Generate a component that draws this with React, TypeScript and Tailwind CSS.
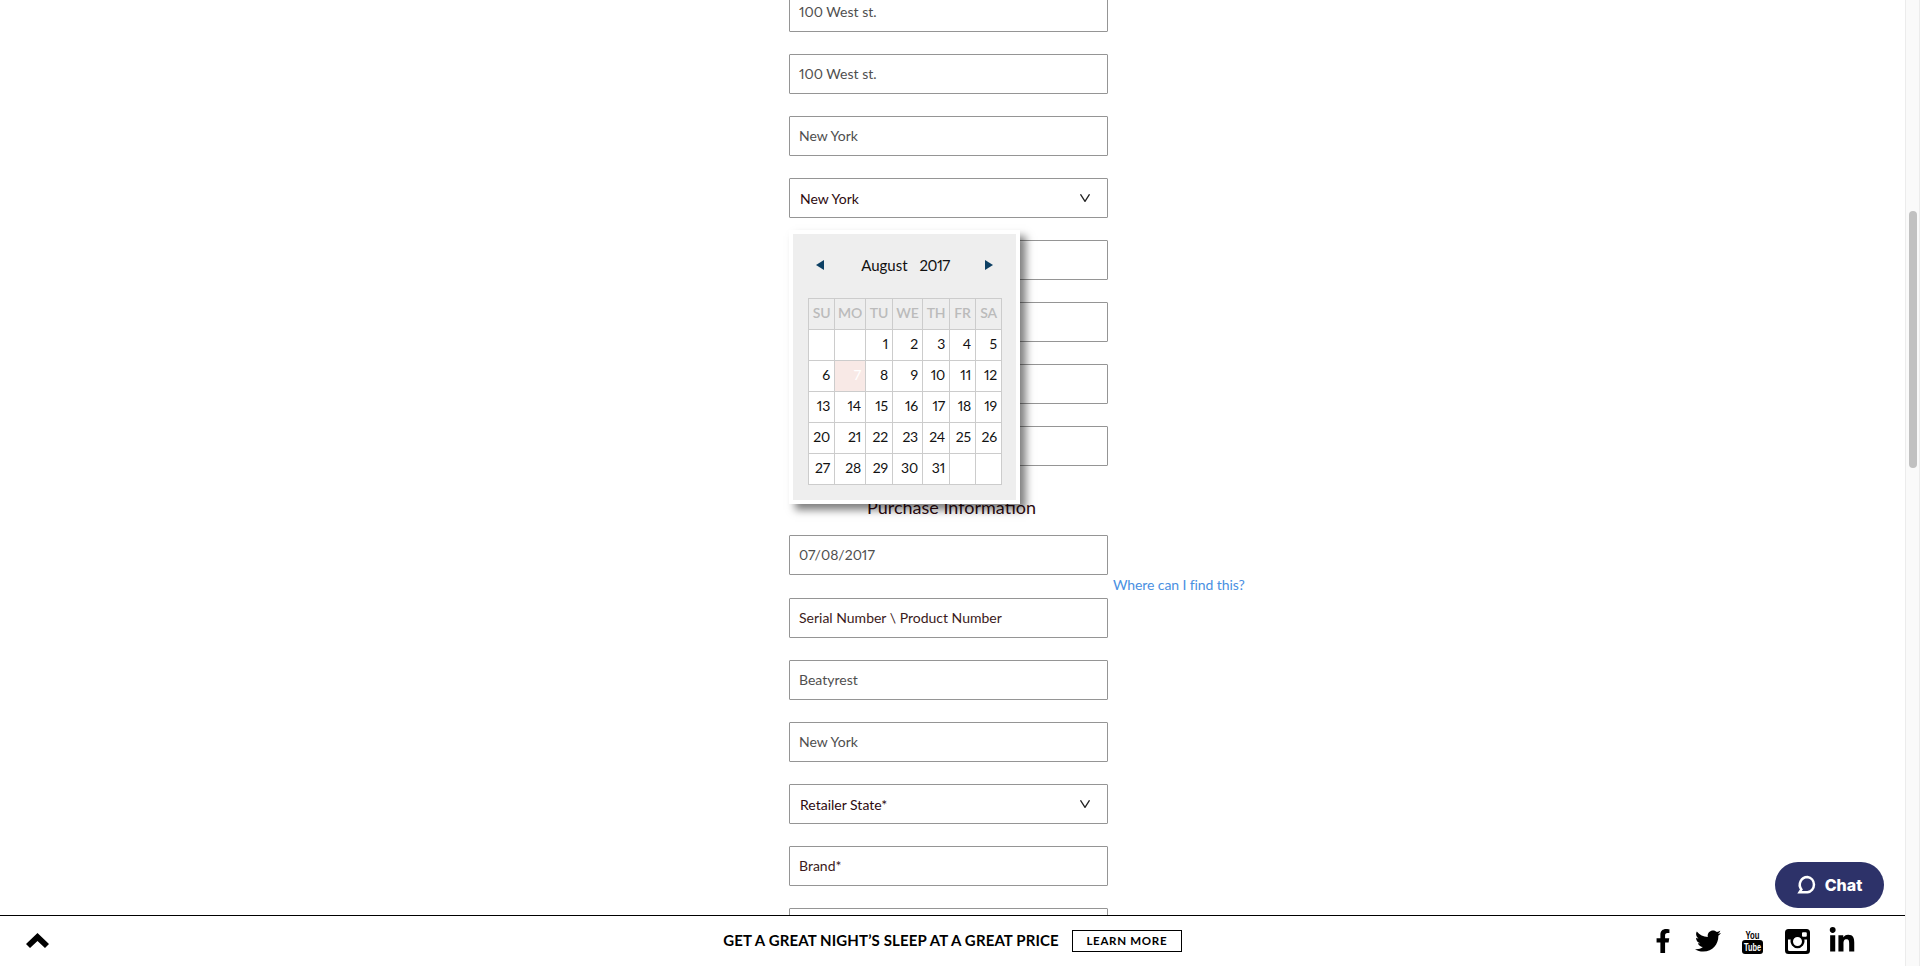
import { FaFacebookF, FaTwitter, FaLinkedinIn } from "react-icons/fa";

const font = "font-['Lato','Liberation_Sans',sans-serif]";

function Field({ text, dark }: { text: string; dark?: boolean }) {
  return (
    <div className={`h-10 w-[319px] border border-[#959595] rounded-[1px] bg-white flex items-center pl-[9px] text-[14px] ${dark ? "text-[#3b1a20]" : "text-[#4f4f4f]"}`}>
      <span className="-mt-[2px]">{text}</span>
    </div>
  );
}

function Select({ text }: { text: string }) {
  return (
    <div className="h-10 w-[319px] border border-[#959595] rounded-[1px] bg-white flex items-center justify-between pl-[10px] pr-[17px] text-[14px] text-[#2e0a10]">
      <span className="mt-[1px]">{text}</span>
      <svg width="10" height="8" viewBox="0 0 10 8" fill="none" stroke="#222" strokeWidth="1.3">
        <path d="M0.5 0.3 L5 7.4 L9.5 0.3" />
      </svg>
    </div>
  );
}

const weeks: (number | null)[][] = [
  [null, null, 1, 2, 3, 4, 5],
  [6, 7, 8, 9, 10, 11, 12],
  [13, 14, 15, 16, 17, 18, 19],
  [20, 21, 22, 23, 24, 25, 26],
  [27, 28, 29, 30, 31, null, null],
];

function Calendar() {
  return (
    <div className="absolute left-[789px] top-[230px] w-[231px] h-[274px] bg-white p-1 shadow-[6px_6px_8px_rgba(0,0,0,0.5)]">
      <div className="bg-[#eeeeee] h-full">
        <div className="h-[64px] flex items-center justify-between px-[23px] pb-[2px]">
          <svg width="8" height="10" viewBox="0 0 8 10" fill="#0c3f63"><path d="M8 0V10L0 5Z" /></svg>
          <div className="text-[15px] text-[#111] flex gap-[12px] pl-[2px]">
            <span>August</span>
            <span className="tracking-[-0.5px]">2017</span>
          </div>
          <svg width="8" height="10" viewBox="0 0 8 10" fill="#0c3f63"><path d="M0 0V10L8 5Z" /></svg>
        </div>
        <table className="ml-[15px] w-[193px] table-fixed border-collapse text-[14px] tracking-[-0.2px]">
          <colgroup>
            {[26, 31, 27, 30, 27, 26, 26].map((w, i) => (
              <col key={i} style={{ width: w }} />
            ))}
          </colgroup>
          <thead>
            <tr className="h-[31px]">
              {["SU", "MO", "TU", "WE", "TH", "FR", "SA"].map((d) => (
                <th key={d} className="border border-[#cccccc] text-center font-semibold text-[#bbbbbb] p-0 pb-[4px]">{d}</th>
              ))}
            </tr>
          </thead>
          <tbody className="bg-white">
            {weeks.map((w, i) => (
              <tr key={i} className="h-[31px]">
                {w.map((d, j) => (
                  <td key={j} className={`border border-[#cccccc] text-right pr-1 p-0 pb-[3px] ${d === 7 ? "bg-[#f8e9e6] text-white" : "text-[#111]"}`}>{d}</td>
                ))}
              </tr>
            ))}
          </tbody>
        </table>
      </div>
    </div>
  );
}

function Instagram() {
  return (
    <svg width="25" height="25" viewBox="0 0 25 25">
      <path fillRule="evenodd" fill="#000" d="M3.5 0H21.5A3.5 3.5 0 0 1 25 3.5V21.5A3.5 3.5 0 0 1 21.5 25H3.5A3.5 3.5 0 0 1 0 21.5V3.5A3.5 3.5 0 0 1 3.5 0ZM3 10.5V20.5A1.5 1.5 0 0 0 4.5 22H20.5A1.5 1.5 0 0 0 22 20.5V10.5H19.3A7 7 0 1 1 5.7 10.5ZM12.5 8A4.5 4.5 0 1 0 12.5 17A4.5 4.5 0 1 0 12.5 8ZM18 3.2A1 1 0 0 0 17 4.2V6.8A1 1 0 0 0 18 7.8H20.8A1 1 0 0 0 21.8 6.8V4.2A1 1 0 0 0 20.8 3.2Z" />
    </svg>
  );
}

function YouTube() {
  return (
    <svg width="21" height="25" viewBox="0 0 21 25" className="overflow-visible">
      <rect x="0" y="11" width="21" height="14" rx="3" fill="#000" />
      <text x="3.5" y="9.5" textLength="14" lengthAdjust="spacingAndGlyphs" fontFamily="'Liberation Sans', sans-serif" fontWeight="700" fontSize="10" fill="#000">You</text>
      <text x="2" y="22" textLength="17" lengthAdjust="spacingAndGlyphs" fontFamily="'Liberation Sans', sans-serif" fontWeight="700" fontSize="11" fill="#fff">Tube</text>
    </svg>
  );
}

function Footer() {
  return (
    <div className="absolute left-0 bottom-0 w-[1905px] h-[51px] bg-white border-t border-black flex items-center justify-between">
      <div className="pl-[26px] w-[400px]">
        <svg width="23" height="15" viewBox="0 0 23 15" fill="#000" className="-mt-[2px]">
          <path d="M11.5 0L23 11L19 15L11.5 8L4 15L0 11Z" />
        </svg>
      </div>
      <div className="flex items-center">
        <span className="text-[15px] font-bold tracking-[0.12px] text-black -mt-[2px]">GET A GREAT NIGHT’S SLEEP AT A GREAT PRICE</span>
        <span className="ml-[13px] w-[110px] h-[22px] border border-black text-[11.5px] font-bold tracking-[0.7px] flex items-center justify-center text-black">LEARN MORE</span>
      </div>
      <div className="w-[400px] flex items-center justify-end pr-[49px]">
        <FaFacebookF size={24} color="#000" />
        <FaTwitter size={26} color="#000" className="ml-[20px]" />
        <span className="ml-[21px]"><YouTube /></span>
        <span className="ml-[22px]"><Instagram /></span>
        <FaLinkedinIn size={28} color="#000" className="ml-[18px]" />
      </div>
    </div>
  );
}

export default function App() {
  return (
    <div className={`${font} proportional-nums relative h-[966px] w-[1920px] overflow-hidden bg-white flex`}>
      <main className="w-[1905px] h-full overflow-hidden">
        <div className="ml-[789px] -mt-2 flex flex-col gap-[22px]">
          <Field text="100 West st." />
          <Field text="100 West st." />
          <Field text="New York" />
          <Select text="New York" />
          <Field text="" />
          <Field text="" />
          <Field text="" />
          <Field text="" />
          <div className="w-[319px] text-center text-[18px] leading-6 text-[#2e0a10] pl-[6px] mt-[7px] -mb-[5px] h-[23px]">Purchase Information</div>
          <div className="flex h-10 mb-[1px]">
            <Field text="07/08/2017" />
            <a className="ml-[5px] mt-[40px] h-5 text-[14px] leading-5 tracking-[-0.1px] text-[#4a90e2] whitespace-nowrap">Where can I find this?</a>
          </div>
          <Field text="Serial Number \ Product Number" dark />
          <Field text="Beatyrest" />
          <Field text="New York" />
          <Select text="Retailer State*" />
          <Field text="Brand*" dark />
          <Field text="" />
        </div>
      </main>
      <div className="w-[15px] h-full bg-[#fafafa] border-x border-[#ececec] pt-[211px] pl-[3px]">
        <div className="w-2 h-[257px] rounded bg-[#c1c1c1]" />
      </div>
      <Calendar />
      <Footer />
      <div className="absolute left-[1775px] top-[862px] w-[109px] h-[46px] rounded-[23px] bg-[#2d3269] flex items-center justify-center gap-[8px] text-white font-['Inter',sans-serif] font-extrabold text-[16px]">
        <svg width="20" height="20" viewBox="0 0 20 20" fill="none" stroke="#fff" strokeWidth="2.5">
          <path d="M10.5 2A7.7 7.7 0 0 1 10.5 17.2H2.6L4.4 14.4A7.7 7.7 0 0 1 10.5 2Z" />
        </svg>
        <span>Chat</span>
      </div>
    </div>
  );
}
